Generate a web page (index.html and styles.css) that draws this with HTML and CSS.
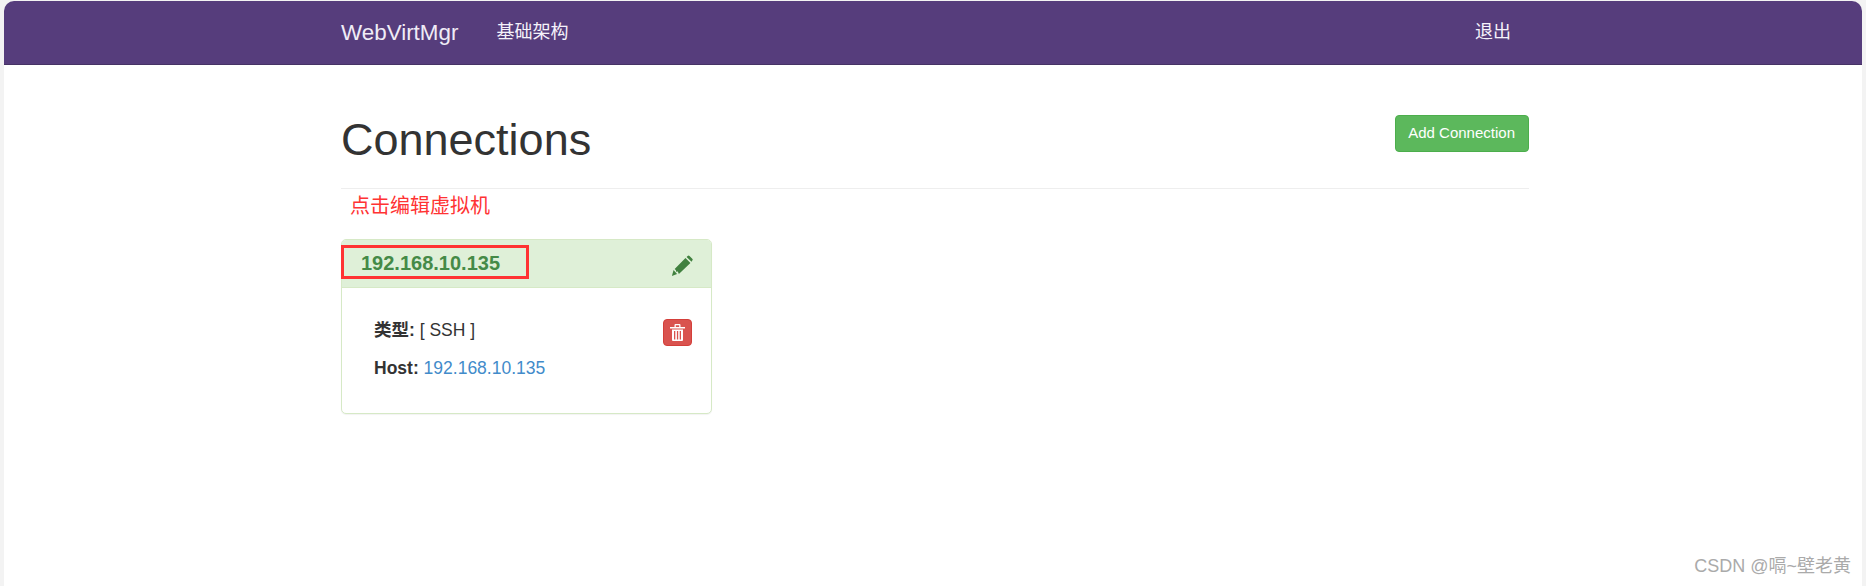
FILE: index.html
```html
<!DOCTYPE html>
<html lang="en">
<head>
    <meta charset="UTF-8">
    <title>WebVirtMgr</title>
    <link rel="stylesheet" href="styles.css">
</head>
<body>
    <div class="window">
        <header class="navbar">
            <div class="container nav-inner">
                <a class="brand" href="#">WebVirtMgr</a>
                <a class="nav-link" href="#">基础架构</a>
                <a class="nav-link logout" href="#">退出</a>
            </div>
        </header>

        <main class="container">
            <div class="page-header">
                <h1>Connections</h1>
                <a class="btn-add" href="#">Add Connection</a>
            </div>
            <p class="hint">点击编辑虚拟机</p>

            <section class="panel">
                <div class="panel-heading">
                    <h3>192.168.10.135</h3>
                    <span class="mark"></span>
                    <svg class="icon-pencil" viewBox="0 0 24 24" width="22" height="22">
                        <path d="M1 23l1.800-6.600L6.600 20.800z"/>
                        <path d="M4 15.200L15.800 3.400l5.400 5.400L8.600 20.600l-1.200-2.600-1.800.3-.2-1.800z"/>
                        <path d="M17 2.200l1.200-1.200a1.400 1.400 0 0 1 2 0l3 3a1.400 1.400 0 0 1 0 2L22.400 7.400z"/>
                    </svg>
                </div>
                <div class="panel-body">
                    <div class="info">
                        <p><strong>类型:</strong> [ SSH ]</p>
                        <p><strong>Host:</strong> <a href="#">192.168.10.135</a></p>
                    </div>
                    <a class="btn-delete" href="#">
                        <svg viewBox="0 0 15 17" width="15" height="17">
                            <path d="M0 3h4.500V1a1 1 0 0 1 1-1h4a1 1 0 0 1 1 1v2H15v1.500H0zM5.800 1.200V3h3.400V1.200z" fill-rule="evenodd"/>
                            <path d="M2 5.500h11V16a1 1 0 0 1-1 1H3a1 1 0 0 1-1-1zM4 7v8.500h1.300V7zM6.900 7v8.500h1.300V7zM9.700 7v8.500H11V7z" fill-rule="evenodd"/>
                        </svg>
                    </a>
                </div>
            </section>
        </main>
    </div>
    <div class="watermark">CSDN @嗝~壁老黄</div>
</body>
</html>
```

FILE: styles.css
```css
/* General Styles */
html, body {
    height: 100%;
}

body {
    margin: 0;
    background-color: #f3f3f3;
    color: #333;
    font-family: "Liberation Sans", "Noto Sans CJK SC", sans-serif;
    font-size: 16px;
    line-height: 1.4;
    overflow: hidden;
}

a {
    text-decoration: none;
}

.window {
    height: 585px;
    margin: 1px 4px 0 4px;
    background-color: #fff;
    border-radius: 10px 10px 0 0;
    overflow: hidden;
}

.container {
    width: 1188px;
    margin-left: 337px;
}

/* Navbar */
.navbar {
    height: 63px;
    background-color: #563d7c;
    border-bottom: 1px solid #463265;
}

.nav-inner {
    display: flex;
    align-items: center;
    height: 63px;
}

.brand {
    color: #f0ecf6;
    font-size: 22.400px;
    margin-right: 38px;
}

.nav-link {
    color: #f5f2fa;
    font-size: 18px;
}

.logout {
    margin-left: auto;
    margin-right: 18px;
}

/* Page header */
.page-header {
    display: flex;
    justify-content: space-between;
    align-items: flex-start;
    height: 123px;
    border-bottom: 1px solid #eee;
}

h1 {
    margin: 48px 0 0;
    font-size: 45px;
    font-weight: 400;
    line-height: 1.2;
    color: #333;
}

.btn-add {
    margin-top: 50px;
    padding: 0 13px 0 12px;
    height: 37px;
    line-height: 33px;
    box-sizing: border-box;
    background-color: #5cb85c;
    border: 1px solid #4cae4c;
    border-radius: 4px;
    color: #fff;
    font-size: 15px;
}

.hint {
    margin: 4px 0 0 9px;
    height: 32px;
    color: #ff3333;
    font-size: 20px;
    line-height: 26px;
}

/* Connection panel */
.panel {
    position: relative;
    width: 369px;
    margin-top: 14px;
    background-color: #fff;
    border: 1px solid #d6e9c6;
    border-radius: 5px;
    box-shadow: 0 1px 1px rgba(0, 0, 0, .05);
}

.panel-heading {
    display: flex;
    justify-content: space-between;
    align-items: center;
    height: 47px;
    padding: 0 18px 0 19px;
    background-color: #dff0d8;
    border-bottom: 1px solid #d6e9c6;
    border-radius: 4px 4px 0 0;
    color: #3c763d;
}

h3 {
    margin: 0 0 2px;
    font-size: 20px;
    font-weight: 700;
    color: #458a47;
}

.mark {
    position: absolute;
    left: -1px;
    top: 5px;
    width: 188px;
    height: 34px;
    box-sizing: border-box;
    border: 3px solid #ff3333;
}

.icon-pencil {
    fill: #41813f;
    margin-top: 5px;
}

.panel-body {
    display: flex;
    justify-content: space-between;
    align-items: flex-start;
    height: 125px;
    padding: 31px 19px 0 32px;
    box-sizing: border-box;
}

.info p {
    margin: 0 0 15px;
    font-size: 17.500px;
    line-height: 23px;
}

.info a {
    color: #428bca;
}

.btn-delete {
    display: flex;
    align-items: center;
    justify-content: center;
    width: 29px;
    height: 27px;
    background-color: #d9534f;
    border: 1px solid #d43f3a;
    border-radius: 4px;
    box-sizing: border-box;
}

.btn-delete svg {
    fill: #fff;
}

.watermark {
    position: absolute;
    right: 15px;
    bottom: 7px;
    color: #aaa;
    font-size: 18px;
}
```
